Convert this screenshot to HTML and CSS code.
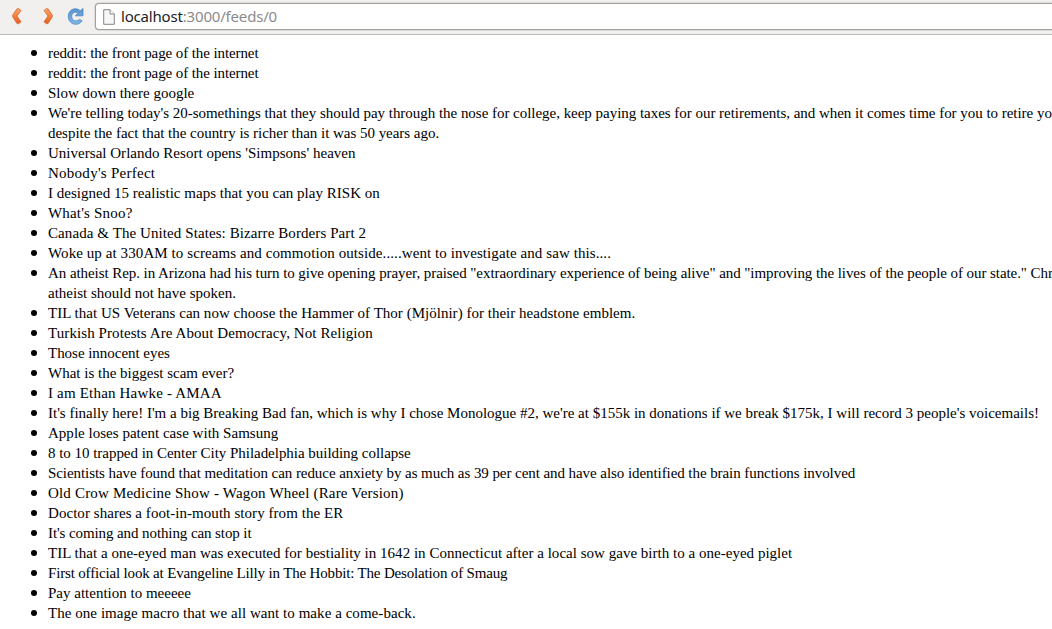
FILE: index.html
```html
<!DOCTYPE html>
<html lang="en">
<head>
<meta charset="utf-8">
<title>Feeds</title>
<link rel="stylesheet" href="styles.css">
</head>
<body>
<header class="toolbar">
  <svg class="nav" width="96" height="34" viewBox="0 0 96 34" aria-hidden="true">
    <defs>
      <linearGradient id="orange" x1="0" y1="0" x2="0" y2="1"><stop offset="0" stop-color="#f9a766"/><stop offset="1" stop-color="#ec5a20"/></linearGradient>
      <linearGradient id="blue" x1="0" y1="0" x2="0" y2="1"><stop offset="0" stop-color="#5b94cf"/><stop offset="1" stop-color="#85b5e4"/></linearGradient>
    </defs>
    <path d="M18.500 8.500L21 10.500L17 16L21 21.800L18.500 23.800L16.800 23.300L12.700 16.800V15.200L16.800 9Z" fill="url(#orange)" stroke="#d66630" stroke-width=".8" stroke-linejoin="round"/>
    <path d="M46.500 8.500L44 10.500L48 16L44 21.800L46.500 23.800L48.200 23.300L52.300 16.800V15.200L48.200 9Z" fill="url(#orange)" stroke="#d66630" stroke-width=".8" stroke-linejoin="round"/>
    <path d="M83 8.500V15.800H75.300L78 13.100C74.500 10.800 71.600 13.200 71.700 16.700C71.800 20.700 76.500 22.300 79.300 19.400L82.100 20.800C77.300 27.500 68.300 23.800 68.300 16.500C68.300 9.500 75.300 6.500 80.300 10.700Z" fill="url(#blue)" stroke="#4885c5" stroke-width=".8" stroke-linejoin="round"/>
  </svg>
  <div class="address">
    <svg class="page-icon" width="12" height="16" viewBox="0 0 12 16" aria-hidden="true"><path d="M.7.7H7L11.300 5V15.300H.7Z" fill="#f7f7f7" stroke="#858585"/><path d="M7 .7V5H11.300" fill="#fff" stroke="#858585"/></svg>
    <span class="url"><span class="host">localhost</span>:3000/feeds/0</span>
  </div>
</header>
<main>
<ul class="feed">
<li class="tight-3">reddit: the front page of the internet</li>
<li class="tight-3">reddit: the front page of the internet</li>
<li>Slow down there google</li>
<li class="tight-1">We're telling today's 20-somethings that they should pay through the nose for college, keep paying taxes for our retirements, and when it comes time for you to retire yo<br>despite the fact that the country is richer than it was 50 years ago.</li>
<li class="loose-1">Universal Orlando Resort opens 'Simpsons' heaven</li>
<li class="loose-5">Nobody's Perfect</li>
<li class="loose-1">I designed 15 realistic maps that you can play RISK on</li>
<li class="loose-4">What's Snoo?</li>
<li class="loose-3">Canada &amp; The United States: Bizarre Borders Part 2</li>
<li class="loose-3">Woke up at 330AM to screams and commotion outside.....went to investigate and saw this....</li>
<li><span class="tight-2">An atheist Rep. in Arizona had his turn to give opening prayer, praised "extraordinary experience of being alive" and "improving the lives of the people of our state." Chr</span><br>atheist should not have spoken.</li>
<li class="loose-1">TIL that US Veterans can now choose the Hammer of Thor (Mjölnir) for their headstone emblem.</li>
<li class="loose-3">Turkish Protests Are About Democracy, Not Religion</li>
<li class="tight-1">Those innocent eyes</li>
<li>What is the biggest scam ever?</li>
<li class="loose-4">I am Ethan Hawke - AMAA</li>
<li>It's finally here! I'm a big Breaking Bad fan, which is why I chose Monologue #2, we're at $155k in donations if we break $175k, I will record 3 people's voicemails!</li>
<li class="loose-1">Apple loses patent case with Samsung</li>
<li class="tight-1">8 to 10 trapped in Center City Philadelphia building collapse</li>
<li class="tight-2">Scientists have found that meditation can reduce anxiety by as much as 39 per cent and have also identified the brain functions involved</li>
<li class="loose-4">Old Crow Medicine Show - Wagon Wheel (Rare Version)</li>
<li class="loose-2">Doctor shares a foot-in-mouth story from the ER</li>
<li class="tight-3">It's coming and nothing can stop it</li>
<li class="loose-1">TIL that a one-eyed man was executed for bestiality in 1642 in Connecticut after a local sow gave birth to a one-eyed piglet</li>
<li class="tight-4">First official look at Evangeline Lilly in The Hobbit: The Desolation of Smaug</li>
<li>Pay attention to meeeee</li>
<li class="loose-2">The one image macro that we all want to make a come-back.</li>
</ul>
</main>
</body>
</html>
```
FILE: styles.css
```css
html, body { margin: 0; height: 100%; overflow: hidden; background: #fff; }
.toolbar { display: flex; box-sizing: border-box; height: 35px; background: #f1f0ee; border-bottom: 1px solid #bcbab7; }
.nav { flex: none; margin-right: -1px; }
.address { display: flex; flex: 1; align-items: center; box-sizing: border-box; height: 27px; margin-top: 3px; padding-left: 7px; background: #fff; border: 1px solid #a3a19e; border-right: 0; border-radius: 4px 0 0 4px; box-shadow: 0 0 0 .5px #c8c6c3; }
.page-icon { flex: none; margin-right: 6px; }
.url { margin-bottom: 2px; font: 15px/20px "Noto Sans", "Open Sans", sans-serif; letter-spacing: -.18px; color: #8b8b8b; white-space: nowrap; }
.host { color: #222; }
.feed { margin: 0; padding: 8px 0 0 48px; list-style: none; font: 15px/20px "Liberation Serif", "Times New Roman", serif; color: #000; white-space: nowrap; }
.feed li::before { content: ""; float: left; width: 6px; height: 6px; margin: 6.500px 0 0 -17.500px; border-radius: 50%; background: #000; }
.tight-1 { letter-spacing: -.03px; }
.tight-2 { letter-spacing: -.068px; }
.tight-3 { letter-spacing: -.095px; }
.tight-4 { letter-spacing: -.167px; }
.loose-1 { letter-spacing: .02px; }
.loose-2 { letter-spacing: .05px; }
.loose-3 { letter-spacing: .085px; }
.loose-4 { letter-spacing: .185px; }
.loose-5 { letter-spacing: .26px; }
```
